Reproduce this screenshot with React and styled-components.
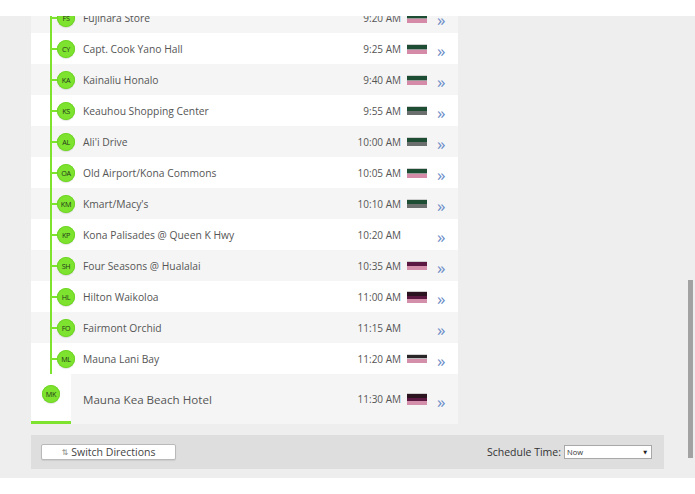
import React from "react";
import styled, { createGlobalStyle, css } from "styled-components";

const GlobalStyle = createGlobalStyle`
  html, body {
    margin: 0;
    padding: 0;
    background: #ffffff;
    font-family: "Open Sans", "DejaVu Sans", sans-serif;
  }
`;

const GREEN = "#7de32f";

const FLAGS = {
  gp: [["#cfcfcf", 1], ["#1d4d32", 4], ["#9a9a9a", 1], ["#d58aa8", 4]],
  gg: [["#cfcfcf", 1], ["#1d4d32", 4], ["#6b706f", 4]],
  pp: [["#cfcfcf", 1], ["#5b1841", 4], ["#d48fab", 4]],
  kp: [["#d5d5d5", 1], ["#2a2628", 3], ["#bdbdbd", 1], ["#d48fab", 4]],
  bpp: [["#cfcfcf", 1], ["#2b1420", 4], ["#5b1841", 3], ["#d48fab", 4]]
};

const stops = [
  { code: "FS", name: "Fujihara Store", time: "9:20 AM", flag: "gp" },
  { code: "CY", name: "Capt. Cook Yano Hall", time: "9:25 AM", flag: "gp" },
  { code: "KA", name: "Kainaliu Honalo", time: "9:40 AM", flag: "gp" },
  { code: "KS", name: "Keauhou Shopping Center", time: "9:55 AM", flag: "gg" },
  { code: "AL", name: "Ali'i Drive", time: "10:00 AM", flag: "gg" },
  { code: "OA", name: "Old Airport/Kona Commons", time: "10:05 AM", flag: "gp" },
  { code: "KM", name: "Kmart/Macy's", time: "10:10 AM", flag: "gg" },
  { code: "KP", name: "Kona Palisades @ Queen K Hwy", time: "10:20 AM", flag: null },
  { code: "SH", name: "Four Seasons @ Hualalai", time: "10:35 AM", flag: "pp" },
  { code: "HL", name: "Hilton Waikoloa", time: "11:00 AM", flag: "bpp" },
  { code: "FO", name: "Fairmont Orchid", time: "11:15 AM", flag: null },
  { code: "ML", name: "Mauna Lani Bay", time: "11:20 AM", flag: "kp" }
];

const last = { code: "MK", name: "Mauna Kea Beach Hotel", time: "11:30 AM", flag: "bpp" };

const Page = styled.div`
  position: relative;
  width: 695px;
  height: 494px;
  display: flex;
  flex-direction: column;
  overflow: hidden;
  background: #ffffff;
`;

const TopStrip = styled.div`
  height: 16px;
  flex-shrink: 0;
  background: #ffffff;
  position: relative;
  z-index: 2;
`;

const Main = styled.div`
  height: 462px;
  flex-shrink: 0;
  background: #eeeeee;
  padding-left: 31px;
  display: flex;
  flex-direction: column;
  overflow: hidden;
`;

const List = styled.div`
  width: 427px;
  margin-top: -14px;
  display: flex;
  flex-direction: column;
`;

const Row = styled.div`
  display: flex;
  align-items: center;
  height: ${(p) => (p.$final ? 50 : 31)}px;
  padding-right: 11px;
  background: ${(p) => (p.$shade ? "#f5f5f5" : "#ffffff")};
`;

const Track = styled.div`
  display: flex;
  align-items: center;
  align-self: stretch;
  padding-left: 19px;
`;

const Rail = styled.span`
  width: 2px;
  align-self: stretch;
  background: ${GREEN};
`;

const Tick = styled.span`
  width: 5px;
  height: 2px;
  background: ${GREEN};
`;

const Badge = styled.span`
  width: 18px;
  height: 18px;
  border-radius: 50%;
  background: ${GREEN};
  box-shadow: 0 0 0 1px #70d426 inset, 0 1px 1px rgba(0, 0, 0, 0.12);
  display: flex;
  align-items: center;
  justify-content: center;
  font-size: 7.2px;
  color: #26361a;
  letter-spacing: -0.3px;
`;

const Terminal = styled.div`
  width: 40px;
  align-self: stretch;
  box-sizing: border-box;
  background: #ffffff;
  border-bottom: 3px solid ${GREEN};
  display: flex;
  justify-content: center;
  padding-top: 11px;
`;

const Name = styled.div`
  flex: 1;
  margin-left: ${(p) => (p.$final ? 12 : 8)}px;
  font-size: ${(p) => (p.$final ? 11.6 : 10.3)}px;
  color: #555555;
  white-space: nowrap;
`;

const Time = styled.div`
  font-size: 10px;
  color: #555555;
  text-align: right;
  white-space: nowrap;
`;

const Flag = styled.div`
  width: 20px;
  margin-left: 6px;
  display: flex;
  flex-direction: column;
`;

const Stripe = styled.span`
  display: block;
  height: ${(p) => p.$h}px;
  background: ${(p) => p.$c};
`;

const Chevron = styled.span`
  width: 10px;
  margin-left: 10px;
  margin-top: 3px;
  font-size: 17px;
  line-height: 1;
  color: #6a8cc8;
  ${(p) =>
    p.$final &&
    css`
      margin-top: 5px;
    `}
`;

const Bar = styled.div`
  width: 633px;
  height: 34px;
  margin-top: 11px;
  box-sizing: border-box;
  background: #dedede;
  display: flex;
  align-items: center;
  justify-content: space-between;
  padding: 0 12px 0 10px;
`;

const SwitchButton = styled.button`
  width: 135px;
  height: 16px;
  padding: 0;
  background: #ffffff;
  border: 1px solid #b9b9b9;
  border-radius: 2px;
  box-shadow: 0 1px 1px rgba(0, 0, 0, 0.08);
  font-family: "Open Sans", "DejaVu Sans", sans-serif;
  font-size: 10.5px;
  color: #444444;
  display: flex;
  align-items: center;
  justify-content: center;
  gap: 3px;
`;

const SwapGlyph = styled.span`
  font-family: "DejaVu Sans", sans-serif;
  font-size: 8px;
  color: #8a8a8a;
`;

const Schedule = styled.div`
  display: flex;
  align-items: center;
  gap: 3px;
`;

const Label = styled.span`
  font-size: 10.5px;
  color: #333333;
`;

const Select = styled.div`
  width: 88px;
  height: 14px;
  box-sizing: border-box;
  border: 1px solid #a8a8a8;
  background: #ffffff;
  display: flex;
  align-items: center;
  justify-content: space-between;
  padding: 0 4px 0 2px;
  font-size: 7.5px;
  color: #333333;
`;

const Caret = styled.span`
  font-family: "DejaVu Sans", sans-serif;
  font-size: 5px;
  color: #222222;
`;

const Footer = styled.div`
  flex: 1;
  background: #ffffff;
`;

const ScrollThumb = styled.div`
  position: absolute;
  right: 2px;
  top: 280px;
  width: 5px;
  height: 178px;
  background: #a2a2a2;
`;

function FlagIcon({ kind }) {
  if (!kind) return <Flag />;
  return (
    <Flag>
      {FLAGS[kind].map(([c, h], i) => (
        <Stripe key={i} $c={c} $h={h} />
      ))}
    </Flag>
  );
}

export default function App() {
  return (
    <Page>
      <GlobalStyle />
      <TopStrip />
      <Main>
        <List>
          {stops.map((s, i) => (
            <Row key={s.code} $shade={i % 2 === 0}>
              <Track>
                <Rail />
                <Tick />
                <Badge>{s.code}</Badge>
              </Track>
              <Name>{s.name}</Name>
              <Time>{s.time}</Time>
              <FlagIcon kind={s.flag} />
              <Chevron>»</Chevron>
            </Row>
          ))}
          <Row $final $shade>
            <Terminal>
              <Badge>{last.code}</Badge>
            </Terminal>
            <Name $final>{last.name}</Name>
            <Time>{last.time}</Time>
            <FlagIcon kind={last.flag} />
            <Chevron $final>»</Chevron>
          </Row>
        </List>
        <Bar>
          <SwitchButton>
            <SwapGlyph>⇅</SwapGlyph>
            Switch Directions
          </SwitchButton>
          <Schedule>
            <Label>Schedule Time:</Label>
            <Select>
              <span>Now</span>
              <Caret>▼</Caret>
            </Select>
          </Schedule>
        </Bar>
      </Main>
      <Footer />
      <ScrollThumb />
    </Page>
  );
}
